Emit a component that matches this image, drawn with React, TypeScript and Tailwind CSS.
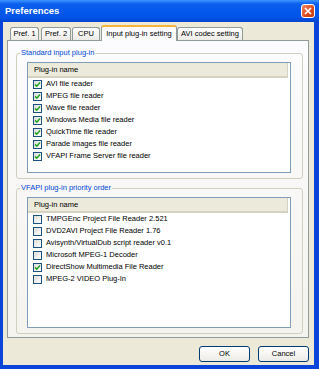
import React from 'react';

interface PluginRow {
  name: string;
  on: boolean;
}

const standardPlugins: PluginRow[] = [
  { name: 'AVI file reader', on: true },
  { name: 'MPEG file reader', on: true },
  { name: 'Wave file reader', on: true },
  { name: 'Windows Media file reader', on: true },
  { name: 'QuickTime file reader', on: true },
  { name: 'Parade images file reader', on: true },
  { name: 'VFAPI Frame Server file reader', on: true },
];

const vfapiPlugins: PluginRow[] = [
  { name: 'TMPGEnc Project File Reader 2.521', on: false },
  { name: 'DVD2AVI Project File Reader 1.76', on: false },
  { name: 'Avisynth/VirtualDub script reader v0.1', on: false },
  { name: 'Microsoft MPEG-1 Decoder', on: false },
  { name: 'DirectShow Multimedia File Reader', on: true },
  { name: 'MPEG-2 VIDEO Plug-In', on: false },
];

const tabClass = 'h-[13px] flex items-center justify-center rounded-t-[3px] border border-b-0 border-[#919B9C] bg-[linear-gradient(to_bottom,#FFFFFF,#ECEBE6)] text-black';

const CheckBox: React.FC<{ on: boolean }> = ({ on }) => (
  <span className="w-[9px] h-[9px] shrink-0 border border-[#1C5180] bg-[linear-gradient(135deg,#DCDCD7,#FFFFFF)] flex items-center justify-center">
    {on && (
      <svg width="7" height="7" viewBox="0 0 7 7">
        <path d="M1 3.4 L2.8 5.2 L6 1.6" fill="none" stroke="#21A121" strokeWidth="1.5" />
      </svg>
    )}
  </span>
);

const PluginList: React.FC<{ rows: PluginRow[]; height: string }> = ({ rows, height }) => (
  <div className={`w-[264px] ${height} border border-[#7F9DB9] bg-white`}>
    <div className="h-[15px] flex bg-white">
      <div className="w-[260px] h-full flex items-center pl-[6px] bg-[#EBEADB] border-b-2 border-r border-[#D6D2C2] text-black">Plug-in name</div>
    </div>
    {rows.map((row) => (
      <div key={row.name} className="h-[12px] flex items-center pl-[5px] gap-[4px] text-black whitespace-nowrap">
        <CheckBox on={row.on} />
        <span>{row.name}</span>
      </div>
    ))}
  </div>
);

export default function App() {
  return (
    <div className="w-[319px] h-[369px] flex flex-col bg-[#0B44D8] overflow-hidden font-['Liberation_Sans',Arial,sans-serif] text-[7.5px] leading-[10px]">
      <div className="h-[22px] shrink-0 flex items-center justify-between pl-[5px] pr-[4px] bg-[linear-gradient(to_bottom,#3D95FF_0%,#0A5FEE_18%,#0055EA_75%,#0345D0_100%)]">
        <span className="text-white font-bold text-[9.5px]">Preferences</span>
        <div className="w-[14px] h-[14px] rounded-[3px] border border-white bg-[linear-gradient(135deg,#F08A63,#D84A1C_60%,#C23A10)] flex items-center justify-center">
          <svg width="8" height="8" viewBox="0 0 8 8">
            <path d="M1 1 L7 7 M7 1 L1 7" stroke="white" strokeWidth="1.6" />
          </svg>
        </div>
      </div>

      <div className="flex-1 ml-[3px] mr-[5px] mb-[4px] bg-[#ECE9D8] flex flex-col pl-[4px]">
        <div className="h-[18px] shrink-0 flex items-end pl-[3px]">
          <div className={`${tabClass} w-[29px]`}>Pref. 1</div>
          <div className={`${tabClass} w-[30px] ml-[2px]`}>Pref. 2</div>
          <div className={`${tabClass} w-[28px] ml-[1px]`}>CPU</div>
          <div className="relative z-10 -mb-px w-[76px] h-[16px] ml-[1px] flex items-center justify-center rounded-t-[3px] border border-b-0 border-[#919B9C] border-t-2 border-t-[#F7B33C] bg-[#FCFCFE] text-black">Input plug-in setting</div>
          <div className={`${tabClass} w-[66px]`}>AVI codec setting</div>
        </div>

        <div className="w-[302px] h-[298px] shrink-0 border border-[#919B9C] bg-[linear-gradient(to_bottom,#FCFCFE,#F4F3EE)] pl-[8px]">
          <fieldset className="mt-[7px] w-[287px] rounded-[3px] border border-[#D0D0BF]">
            <legend className="ml-[3px] px-[1px] text-[#0046D5]">Standard input plug-in</legend>
            <div className="pl-[10px] pt-[4px] pb-[5px]">
              <PluginList rows={standardPlugins} height="h-[111px]" />
            </div>
          </fieldset>
          <fieldset className="mt-[4px] w-[287px] rounded-[3px] border border-[#D0D0BF]">
            <legend className="ml-[3px] px-[1px] text-[#0046D5]">VFAPI plug-in priority order</legend>
            <div className="pl-[10px] pt-[4px] pb-[5px]">
              <PluginList rows={vfapiPlugins} height="h-[131px]" />
            </div>
          </fieldset>
        </div>

        <div className="w-[302px] mt-[8px] flex justify-end gap-[8px]">
          <button className="w-[51px] h-[16px] rounded-[3px] border border-[#003C74] bg-[linear-gradient(to_bottom,#FFFFFF,#ECEBE6)] text-black">OK</button>
          <button className="w-[51px] h-[16px] rounded-[3px] border border-[#003C74] bg-[linear-gradient(to_bottom,#FFFFFF,#ECEBE6)] text-black">Cancel</button>
        </div>
      </div>
    </div>
  );
}
